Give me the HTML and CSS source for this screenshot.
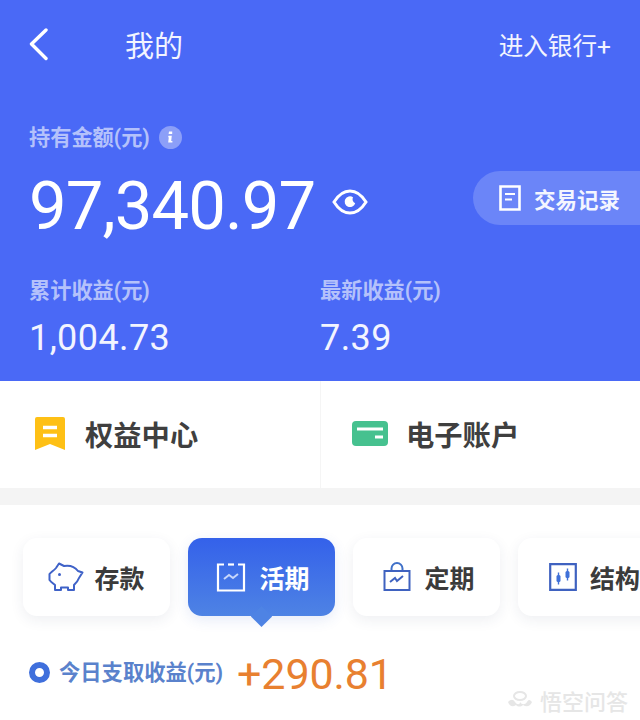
FILE: index.html
```html
<!DOCTYPE html>
<html lang="zh">
<head>
<meta charset="utf-8">
<title>我的</title>
<link rel="stylesheet" href="styles.css">
</head>
<body>
<div class="page">
  <header class="hero">
    <div class="nav">
      <svg class="back" width="22" height="34" viewBox="0 0 22 34"><path d="M17 2 L2.500 16 L17 30.500" fill="none" stroke="#fff" stroke-width="3.400" stroke-linecap="round" stroke-linejoin="round"/></svg>
      <div class="title">我的</div>
      <div class="bank">进入银行+</div>
    </div>
    <div class="held">
      <span class="label">持有金额(元)</span>
      <svg class="info" width="23" height="23" viewBox="0 0 23 23"><circle cx="11.500" cy="11.500" r="11.500" fill="#8c9ff8"/><path d="M10 5.500h3.200v2.600H9.600z M9.600 9.700h3.200l-.6 5.300h1.200v1.600H9.200l.6-5.300H9z" fill="#fff"/></svg>
    </div>
    <div class="amount-row">
      <div class="amount">97,340.97</div>
      <svg class="eye" width="36" height="28" viewBox="0 0 36 28"><path d="M2 14 C7 6 12 3 18 3 C24 3 29 6 34 14 C29 22 24 25 18 25 C12 25 7 22 2 14 Z" fill="none" stroke="#fff" stroke-width="3"/><path d="M21 9.200 A5.400 5.400 0 1 0 23.200 15.200 A4.400 4.400 0 0 1 21 9.200 Z" fill="#fff"/></svg>
      <div class="records">
        <svg width="22" height="26" viewBox="0 0 22 26"><path d="M1.500 1.500h19v23h-19z" fill="none" stroke="#fff" stroke-width="2.600"/><path d="M6 9h10M6 14.500h7" stroke="#fff" stroke-width="2.200" fill="none"/></svg>
        <span>交易记录</span>
      </div>
    </div>
    <div class="stats">
      <div class="stat">
        <div class="label">累计收益(元)</div>
        <div class="stat-value">1,004.73</div>
      </div>
      <div class="stat">
        <div class="label">最新收益(元)</div>
        <div class="stat-value">7.39</div>
      </div>
    </div>
  </header>

  <section class="services">
    <div class="service service-left">
      <svg width="30" height="34" viewBox="0 0 30 34"><path d="M2 0h26a2 2 0 0 1 2 2v31l-15-6-15 6V2a2 2 0 0 1 2-2z" fill="#fec015"/><path d="M8 10.500h14M8 18.500h14" stroke="#fff" stroke-width="3.400" fill="none"/></svg>
      <span>权益中心</span>
    </div>
    <div class="service service-right">
      <svg width="36" height="26" viewBox="0 0 36 26"><rect width="36" height="25" rx="4" fill="#46c18f"/><path d="M5 8h26" stroke="#fff" stroke-width="3"/><path d="M23 16h8" stroke="#fff" stroke-width="3"/></svg>
      <span>电子账户</span>
    </div>
  </section>

  <div class="divider"></div>

  <section class="products">
    <div class="tabs">
      <div class="tab">
        <svg width="36" height="30" viewBox="0 0 36 30"><path d="M8 6 L11 1.500 L16 4 C22 3 27 5 30 9 L34.500 10.500 L31 16 C30 19 28 21 26 23 L26 28 H20 V25.500 H13 V28 H7 V23 C4.500 21 3 20 1.500 18 V12 C3 10 6 8.500 8 6 Z" fill="none" stroke="#3f62c8" stroke-width="2" stroke-linejoin="round"/><circle cx="11.500" cy="12.500" r="1.500" fill="#3f62c8"/></svg>
        <span>存款</span>
      </div>
      <div class="tab tab-active">
        <svg width="30" height="30" viewBox="0 0 30 30"><path d="M8 2.500H2v26h26v-26h-6" fill="none" stroke="#fff" stroke-width="2.200"/><path d="M12 2.500h6" stroke="#fff" stroke-width="2.200"/><path d="M8 17l5-4 4 3 5-4" fill="none" stroke="#c7d6fb" stroke-width="2"/></svg>
        <span>活期</span>
      </div>
      <div class="tab">
        <svg width="28" height="30" viewBox="0 0 28 30"><path d="M8.500 8V6.500a5.500 5.500 0 0 1 11 0V8" fill="none" stroke="#3f70c8" stroke-width="2"/><path d="M1.500 9h25v19h-25z" fill="none" stroke="#3f62c0" stroke-width="2"/><path d="M7 20l5-4 2 3 6-5" fill="none" stroke="#3f62c0" stroke-width="2"/></svg>
        <span>定期</span>
      </div>
      <div class="tab">
        <svg width="28" height="28" viewBox="0 0 28 28"><path d="M1.200 1.200h25.600v25.600H1.200z" fill="none" stroke="#3f62c0" stroke-width="2.200"/><path d="M9.500 9.500v12M18.500 5.500v12" stroke="#3f70d8" stroke-width="1.400"/><rect x="7.500" y="12" width="4" height="7" rx="1.500" fill="#3f70d8"/><rect x="16.500" y="8" width="4" height="7" rx="1.500" fill="#3f70d8"/></svg>
        <span>结构</span>
      </div>
    </div>
    <div class="earn">
      <span class="dot"></span>
      <span class="earn-label">今日支取收益(元)</span>
      <span class="earn-value">+290.81</span>
    </div>
  </section>

  <div class="watermark">
    <svg width="26" height="20" viewBox="0 0 26 20"><ellipse cx="13" cy="6" rx="6" ry="4" fill="none" stroke="#e6e6e6" stroke-width="2"/><path d="M1 12c3-3 5-3 7 0s5 3 5 0c2 3 5 3 7 0s3-2 5 0c-2 5-6 5-9 3-2 2-5 2-7 0-3 2-6 2-8-3z" fill="#e6e6e6"/></svg>
    <span>悟空问答</span>
  </div>
</div>
</body>
</html>
```

FILE: styles.css
```css
* { box-sizing: border-box; }
html, body { margin: 0; padding: 0; }
body {
  width: 640px;
  height: 720px;
  overflow: hidden;
  background: #fff;
  font-family: "Roboto", "Noto Sans CJK SC", sans-serif;
}
.page { position: relative; width: 640px; height: 720px; overflow: hidden; }

.hero {
  height: 381px;
  background: #4a69f6;
  color: #fff;
  padding: 28px 0 0 29px;
}
.nav { display: flex; align-items: center; height: 34px; }
.back { flex: none; margin-right: 74px; }
.title { font-size: 29px; line-height: 34px; color: #f2f4ff; margin-top: 3px; }
.bank { margin-left: auto; margin-right: 29px; font-size: 24.6px; line-height: 34px; color: #f2f4ff; margin-top: 3px; }

.held { display: flex; align-items: center; gap: 9px; margin-top: 62px; height: 28px; }
.label { font-size: 21.200px; font-weight: 700; line-height: 28px; color: #b4c1fb; }
.info { flex: none; margin-top: -2px; }

.amount-row { display: flex; align-items: center; margin-top: 11px; height: 70px; }
.amount { font-size: 67px; line-height: 70px; font-weight: 400; letter-spacing: -0.9px; width: 303px; margin-top: 16px; }
.eye { flex: none; margin-top: 8px; }
.records {
  display: flex;
  align-items: center;
  gap: 13px;
  margin-left: auto;
  width: 167px;
  height: 54px;
  padding-left: 26px;
  border-radius: 27px 0 0 27px;
  background: #6b85f8;
}
.records span { font-size: 21.500px; font-weight: 700; color: #f4f6ff; white-space: nowrap; }

.stats { display: flex; margin-top: 44px; }
.stat { width: 291px; }
.stat-value { margin-top: 12px; font-size: 36px; line-height: 42px; color: #f2f4ff; letter-spacing: 0.4px; }

.services { display: flex; height: 107px; background: #fff; }
.service { width: 320px; display: flex; align-items: center; color: #3f3f3f; font-size: 28.300px; font-weight: 700; }
.service-left { padding: 0 0 0 35px; gap: 20px; }
.service-left svg { margin-top: -2px; }
.service-right { padding-left: 31px; gap: 18px; border-left: 1px solid #f5f5f5; }
.service-right svg { margin-top: -2px; }
.service span { margin-top: -2px; }

.divider { height: 17px; background: #f4f4f4; }

.products { padding: 33px 0 0 23px; }
.tabs { display: flex; gap: 18px; width: 700px; }
.tab {
  position: relative;
  flex: none;
  width: 147px;
  height: 78px;
  display: flex;
  align-items: center;
  justify-content: center;
  gap: 10px;
  border-radius: 14px;
  background: #fff;
  box-shadow: 0 4px 14px rgba(40, 50, 90, 0.08);
  color: #3b3b3b;
  font-size: 25px;
  font-weight: 700;
}
.tab span { white-space: nowrap; }
.tab:nth-child(2) { gap: 13px; padding-left: 3px; }
.tab:nth-child(3) { gap: 13px; padding-left: 5px; }
.tab-active {
  background: linear-gradient(#3461ea, #4e83e4);
  color: #fff;
  box-shadow: 0 4px 14px rgba(50, 90, 200, 0.12);
}
.tab-active::after {
  content: "";
  position: absolute;
  left: 66px;
  top: 71px;
  width: 15px;
  height: 15px;
  background: #4e83e4;
  transform: rotate(45deg);
}
.tab:last-child { justify-content: flex-start; padding-left: 31px; gap: 13px; }

.earn { display: flex; align-items: center; margin-top: 33px; padding-left: 6px; height: 50px; }
.dot {
  flex: none;
  width: 21px;
  height: 21px;
  border-radius: 50%;
  border: 6px solid #3f6fdc;
  background: #fff;
  margin-top: -4px;
}
.earn-label { margin-left: 9px; font-size: 21.300px; font-weight: 700; color: #5a82cc; margin-top: -7px; white-space: nowrap; }
.earn-value { margin-left: 14px; font-size: 43px; line-height: 50px; color: #e88030; letter-spacing: -0.1px; white-space: nowrap; }

.watermark {
  position: absolute;
  right: 12px;
  top: 684px;
  display: flex;
  align-items: center;
  gap: 7px;
  color: #e6e6e6;
  font-size: 22px;
  font-weight: 500;
}
```
